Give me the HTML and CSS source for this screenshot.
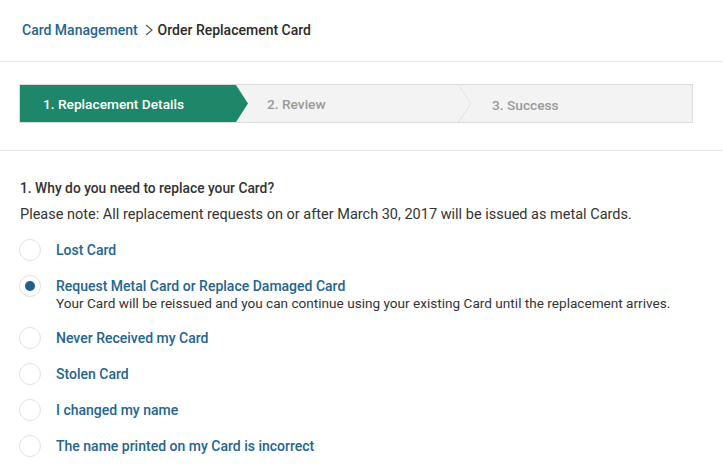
FILE: index.html
```html
<!DOCTYPE html>
<html>
<head>
<meta charset="utf-8">
<link rel="stylesheet" href="styles.css">
</head>
<body>
<header class="topbar">
  <nav class="crumbs">
    <a class="crumb-link" href="#">Card Management</a>
    <svg class="crumb-sep" width="12" height="14" viewBox="0 0 12 14"><path d="M3 2 L9 7 L3 12" fill="none" stroke="#555" stroke-width="1.1"/></svg>
    <span class="crumb-current">Order Replacement Card</span>
  </nav>
</header>
<section class="steps-wrap">
  <div class="stepper">
    <div class="step step-active">1. Replacement Details
      <svg class="arrow arrow-active" width="12" height="37" viewBox="0 0 12 37"><path d="M0 0 L12 18.5 L0 37 Z" fill="#1e876a"/></svg>
    </div>
    <div class="step step-two">2. Review
      <svg class="arrow arrow-split" width="14" height="37" viewBox="0 0 14 37"><path d="M0.5 0 L13 18.5 L0.5 37" fill="none" stroke="#e2e2e2" stroke-width="1"/></svg>
    </div>
    <div class="step step-three">3. Success</div>
  </div>
</section>
<main class="content">
  <h2 class="question">1. Why do you need to replace your Card?</h2>
  <p class="note">Please note: All replacement requests on or after March 30, 2017 will be issued as metal Cards.</p>
  <ul class="options">
    <li class="option"><span class="radio"></span><div class="opt-text"><span class="opt-label">Lost Card</span></div></li>
    <li class="option"><span class="radio radio-on"></span><div class="opt-text"><span class="opt-label">Request Metal Card or Replace Damaged Card</span><span class="opt-desc">Your Card will be reissued and you can continue using your existing Card until the replacement arrives.</span></div></li>
    <li class="option"><span class="radio"></span><div class="opt-text"><span class="opt-label">Never Received my Card</span></div></li>
    <li class="option"><span class="radio"></span><div class="opt-text"><span class="opt-label">Stolen Card</span></div></li>
    <li class="option"><span class="radio"></span><div class="opt-text"><span class="opt-label">I changed my name</span></div></li>
    <li class="option"><span class="radio"></span><div class="opt-text"><span class="opt-label">The name printed on my Card is incorrect</span></div></li>
  </ul>
</main>
</body>
</html>
```

FILE: styles.css
```css
* { box-sizing: border-box; }
html, body { margin: 0; padding: 0; background: #fff; }
body {
  font-family: Roboto, "Liberation Sans", Arial, sans-serif;
  color: #333;
  width: 723px;
  overflow: hidden;
}
.topbar {
  height: 62px;
  border-bottom: 1px solid #e6e6e6;
  display: flex;
  align-items: center;
  padding: 0 0 1px 22px;
}
.crumbs {
  display: flex;
  align-items: center;
  font-size: 14px;
  font-weight: 500;
}
.crumb-link { color: #24658f; text-decoration: none; }
.crumb-sep { margin: 0 3px 0 5px; }
.crumb-current { color: #2b2b2b; }
.steps-wrap {
  height: 89px;
  border-bottom: 1px solid #e6e6e6;
  padding: 22px 0 0 19px;
}
.stepper {
  display: flex;
  width: 674px;
  height: 39px;
  border: 1px solid #dcdcdc;
  background: #f3f3f3;
}
.step {
  position: relative;
  display: flex;
  align-items: center;
  height: 37px;
  font-size: 13.7px;
  font-weight: 500;
  color: #9a9a9a;
}
.step-active {
  width: 216px;
  background: #1e876a;
  color: #fff;
  padding-left: 23px;
}
.step-two { width: 223px; padding-left: 31px; }
.step-three { flex: 1; padding-left: 33px; padding-top: 2px; }
.arrow { position: absolute; top: 0; }
.arrow-active { right: -12px; }
.arrow-split { right: -13px; }
.content { padding: 28px 0 0 20px; }
.question {
  margin: 0;
  font-size: 13.8px;
  font-weight: 500;
  color: #333;
  line-height: 18px;
}
.note {
  margin: 8px 0 0;
  font-size: 14.5px;
  line-height: 20px;
  color: #333;
}
.options { list-style: none; margin: 14px 0 0; padding: 0; }
.option {
  display: flex;
  align-items: flex-start;
  min-height: 36px;
}
.radio {
  flex: none;
  width: 22px;
  height: 22px;
  border: 1px solid #e2e2e2;
  border-radius: 50%;
  display: flex;
  align-items: center;
  justify-content: center;
  margin: 0 15px 0 -1px;
}
.radio-on::after {
  content: "";
  width: 10px;
  height: 10px;
  border-radius: 50%;
  background: #1f5f8e;
}
.opt-text { display: flex; flex-direction: column; padding-top: 2px; }
.opt-label {
  font-size: 14px;
  font-weight: 500;
  color: #24658f;
  line-height: 18px;
}
.opt-desc {
  font-size: 13.6px;
  color: #333;
  line-height: 16px;
  padding-bottom: 16px;
}
```
